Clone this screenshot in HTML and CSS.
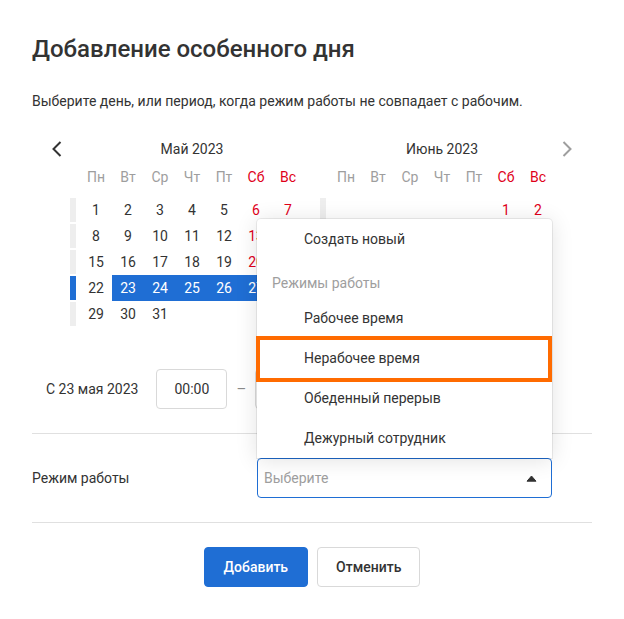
FILE: index.html
```html
<!DOCTYPE html>
<html lang="ru">
<head>
<meta charset="utf-8">
<title>Добавление особенного дня</title>
<link rel="stylesheet" href="styles.css">
</head>
<body>
<div class="dialog">
  <h1 class="title">Добавление особенного дня</h1>
  <p class="subtitle">Выберите день, или период, когда режим работы не совпадает с рабочим.</p>

  <div class="calendar">
    <button class="nav nav-prev" type="button" aria-label="Назад">
      <svg width="10" height="16" viewBox="0 0 10 16"><path d="M8.5 1 L1.5 8 L8.5 15" fill="none" stroke="#333" stroke-width="2"/></svg>
    </button>

    <div class="month">
      <div class="month-title">Май 2023</div>
      <div class="weekdays">
        <span></span>
        <span class="wd">Пн</span><span class="wd">Вт</span><span class="wd">Ср</span><span class="wd">Чт</span><span class="wd">Пт</span><span class="wd we">Сб</span><span class="wd we">Вс</span>
      </div>
      <div class="days">
        <span class="wk"></span>
        <span class="d">1</span><span class="d">2</span><span class="d">3</span><span class="d">4</span><span class="d">5</span><span class="d we">6</span><span class="d we">7</span>
        <span class="wk"></span>
        <span class="d">8</span><span class="d">9</span><span class="d">10</span><span class="d">11</span><span class="d">12</span><span class="d we">13</span><span class="d we">14</span>
        <span class="wk"></span>
        <span class="d">15</span><span class="d">16</span><span class="d">17</span><span class="d">18</span><span class="d">19</span><span class="d we">20</span><span class="d we">21</span>
        <span class="wk wk-active"></span>
        <span class="d">22</span><span class="d sel">23</span><span class="d sel">24</span><span class="d sel">25</span><span class="d sel">26</span><span class="d sel">27</span><span class="d sel">28</span>
        <span class="wk"></span>
        <span class="d">29</span><span class="d">30</span><span class="d">31</span><span class="d"></span><span class="d"></span><span class="d"></span><span class="d"></span>
      </div>
    </div>

    <div class="month">
      <div class="month-title">Июнь 2023</div>
      <div class="weekdays">
        <span></span>
        <span class="wd">Пн</span><span class="wd">Вт</span><span class="wd">Ср</span><span class="wd">Чт</span><span class="wd">Пт</span><span class="wd we">Сб</span><span class="wd we">Вс</span>
      </div>
      <div class="days">
        <span class="wk"></span>
        <span class="d"></span><span class="d"></span><span class="d"></span><span class="d"></span><span class="d"></span><span class="d we">1</span><span class="d we">2</span>
        <span class="wk"></span>
        <span class="d">3</span><span class="d">4</span><span class="d">5</span><span class="d">6</span><span class="d">7</span><span class="d we">8</span><span class="d we">9</span>
        <span class="wk"></span>
        <span class="d">10</span><span class="d">11</span><span class="d">12</span><span class="d">13</span><span class="d">14</span><span class="d we">15</span><span class="d we">16</span>
        <span class="wk"></span>
        <span class="d">17</span><span class="d">18</span><span class="d">19</span><span class="d">20</span><span class="d">21</span><span class="d we">22</span><span class="d we">23</span>
        <span class="wk"></span>
        <span class="d">24</span><span class="d">25</span><span class="d">26</span><span class="d">27</span><span class="d">28</span><span class="d we">29</span><span class="d we">30</span>
      </div>
    </div>

    <button class="nav nav-next" type="button" aria-label="Вперёд">
      <svg width="10" height="16" viewBox="0 0 10 16"><path d="M1.5 1 L8.5 8 L1.5 15" fill="none" stroke="#9e9e9e" stroke-width="2"/></svg>
    </button>
  </div>

  <div class="time-row">
    <span class="time-label">С 23 мая 2023</span>
    <div class="time-input">00:00</div>
    <span class="dash">–</span>
    <div class="time-input">23:59</div>
  </div>

  <div class="divider"></div>

  <div class="field-row">
    <span class="field-label">Режим работы</span>
    <div class="select-wrap">
      <div class="menu">
        <div class="menu-item">Создать новый</div>
        <div class="menu-group">Режимы работы</div>
        <div class="menu-item">Рабочее время</div>
        <div class="menu-item menu-item-marked">Нерабочее время</div>
        <div class="menu-item">Обеденный перерыв</div>
        <div class="menu-item">Дежурный сотрудник</div>
      </div>
      <div class="select">
        <span class="placeholder">Выберите</span>
        <svg class="caret" width="11" height="7" viewBox="0 0 11 7"><path d="M1 6.2 L5.5 1 L10 6.2 Z" fill="#333" stroke="#333" stroke-width="1" stroke-linejoin="round"/></svg>
      </div>
    </div>
  </div>

  <div class="divider"></div>

  <div class="actions">
    <button class="btn btn-primary" type="button">Добавить</button>
    <button class="btn btn-secondary" type="button">Отменить</button>
  </div>
</div>
</body>
</html>
```

FILE: styles.css
```css
* { box-sizing: border-box; }

html, body {
  margin: 0;
  padding: 0;
  background: #fff;
}

body {
  font-family: Roboto, "Noto Sans", "Liberation Sans", sans-serif;
  color: #333;
  font-size: 14px;
}

.dialog {
  width: 624px;
  padding: 33px 32px 32px;
}

.title {
  margin: 0;
  font-size: 24px;
  line-height: 32px;
  font-weight: 500;
  color: #333;
}

.subtitle {
  margin: 26px 0 0;
  font-size: 14px;
  line-height: 20px;
  color: #333;
}

/* calendar */
.calendar {
  margin-top: 24px;
  display: flex;
  align-items: flex-start;
}

.nav {
  width: 38px;
  height: 28px;
  padding: 0;
  border: 0;
  background: none;
  display: flex;
  align-items: center;
}

.nav-prev { justify-content: flex-end; padding-right: 8px; }
.nav-next { justify-content: flex-start; padding-left: 8px; }

.month { width: 234px; }
.month + .month { margin-left: 16px; }

.month-title {
  padding-left: 10px;
  text-align: center;
  line-height: 28px;
  font-size: 14px;
  color: #333;
}

.weekdays,
.days {
  display: grid;
  grid-template-columns: 10px repeat(7, 32px);
}

.weekdays { grid-auto-rows: 28px; }

.days {
  margin-top: 6px;
  grid-auto-rows: 26px;
}

.wd {
  text-align: center;
  line-height: 28px;
  color: #9e9e9e;
}

.wd.we { color: #e0001a; }

.wk {
  width: 6px;
  height: 24px;
  margin: 1px 0;
  background: #eeeeee;
}

.wk-active { background: #1f6ed4; }

.d {
  text-align: center;
  line-height: 26px;
  color: #333;
}

.d.we { color: #e0001a; }

.d.sel {
  background: #1f6ed4;
  color: #fff;
}

/* time row */
.time-row {
  margin-top: 42px;
  padding-left: 14px;
  display: flex;
  align-items: center;
  height: 40px;
}

.time-label { margin-right: 18px; }

.time-input {
  width: 71px;
  height: 40px;
  border: 1px solid #d9d9d9;
  border-radius: 4px;
  display: flex;
  align-items: center;
  justify-content: center;
  color: #333;
}

.dash {
  width: 28px;
  text-align: center;
  color: #8a8a8a;
  font-size: 15px;
}

.divider {
  height: 1px;
  background: #e0e0e0;
  margin: 24px 0;
}

/* field */
.field-row {
  display: flex;
  align-items: center;
}

.field-label {
  flex: 0 0 225px;
  font-size: 14px;
}

.select-wrap {
  position: relative;
  width: 295px;
}

.select {
  height: 40px;
  border: 1px solid #1f6ed4;
  border-radius: 4px;
  padding: 0 14px 0 6px;
  display: flex;
  align-items: center;
  justify-content: space-between;
}

.placeholder { color: #9e9e9e; }

.menu {
  position: absolute;
  left: 0;
  right: 0;
  bottom: 100%;
  background: #fff;
  border-radius: 4px 4px 0 0;
  box-shadow: 0 0 0 1px rgba(0, 0, 0, 0.07), 0 2px 22px rgba(0, 0, 0, 0.12);
  z-index: 2;
}

.menu-item {
  position: relative;
  height: 40px;
  line-height: 40px;
  padding-left: 47px;
  color: #333;
}

.menu-group {
  height: 39px;
  padding: 14px 15px 5px;
  line-height: 20px;
  color: #9e9e9e;
}

.menu-item-marked::after {
  content: "";
  position: absolute;
  top: -2px;
  bottom: -4px;
  left: -1px;
  right: 0;
  border: 4px solid #ff6b00;
}

/* actions */
.actions {
  display: flex;
  justify-content: center;
  gap: 9px;
}

.btn {
  height: 40px;
  border-radius: 4px;
  font-family: Roboto, "Noto Sans", "Liberation Sans", sans-serif;
  font-size: 14px;
  font-weight: 500;
  padding: 0 19px;
  cursor: pointer;
}

.btn-primary {
  background: #1f6ed4;
  color: #fff;
  border: 1px solid #1f6ed4;
}

.btn-secondary {
  background: #fff;
  color: #333;
  border: 1px solid #d9d9d9;
  padding: 0 18px;
}
```
